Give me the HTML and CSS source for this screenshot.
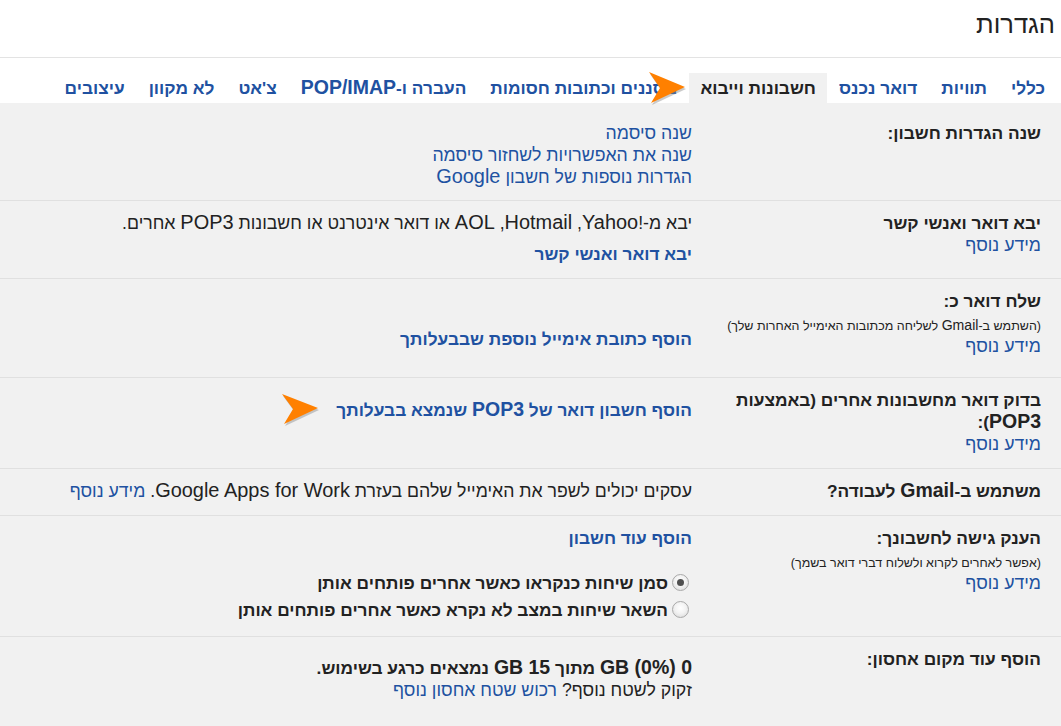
FILE: index.html
```html
<!DOCTYPE html>
<html lang="he" dir="rtl">
<head>
<meta charset="utf-8">
<title>הגדרות</title>
<link rel="stylesheet" href="styles.css">
</head>
<body>
<header class="top">
  <h1 class="title">הגדרות</h1>
</header>
<nav class="tabs">
  <a class="tab" href="#">כללי</a>
  <a class="tab" href="#">תוויות</a>
  <a class="tab" href="#">דואר נכנס</a>
  <a class="tab active" href="#">חשבונות וייבוא</a>
  <a class="tab" href="#">מסננים וכתובות חסומות</a>
  <a class="tab" href="#">העברה ו-<span class="lt">POP/IMAP</span></a>
  <a class="tab" href="#">צ'אט</a>
  <a class="tab" href="#">לא מקוון</a>
  <a class="tab" href="#">עיצובים</a>
  <svg class="arrow arrow-tab" width="38" height="33" viewBox="0 0 38 33" aria-hidden="true">
    <polygon points="1,2 37,17 3,33 12,18" fill="#8a8a8a" opacity="0.45"/>
    <polygon points="0,0 36,15 2,31 11,16" fill="#ff8000"/>
  </svg>
</nav>
<main class="panel">
  <section class="row row-first">
    <div class="label"><div class="label-title">שנה הגדרות חשבון:</div></div>
    <div class="content">
      <a class="link block" href="#">שנה סיסמה</a>
      <a class="link block" href="#">שנה את האפשרויות לשחזור סיסמה</a>
      <a class="link block" href="#">הגדרות נוספות של חשבון <span class="lt">Google</span></a>
    </div>
  </section>
  <section class="row">
    <div class="label">
      <div class="label-title">יבא דואר ואנשי קשר</div>
      <a class="link block" href="#">מידע נוסף</a>
    </div>
    <div class="content">
      <div class="text">יבא מ-!<span class="lt">Yahoo</span>&rlm;, <span class="lt">Hotmail</span>&rlm;, <span class="lt">AOL</span> או דואר אינטרנט או חשבונות <span class="lt">POP3</span> אחרים.</div>
      <a class="link strong block gap-import" href="#">יבא דואר ואנשי קשר</a>
    </div>
  </section>
  <section class="row row-send">
    <div class="label">
      <div class="label-title">שלח דואר כ:</div>
      <div class="hint">(השתמש ב-<span class="lt">Gmail</span> לשליחה מכתובות האימייל האחרות שלך)</div>
      <a class="link block" href="#">מידע נוסף</a>
    </div>
    <div class="content">
      <a class="link strong block gap-send" href="#">הוסף כתובת אימייל נוספת שבבעלותך</a>
    </div>
  </section>
  <section class="row">
    <div class="label">
      <div class="label-title">בדוק דואר מחשבונות אחרים (באמצעות <span class="lt">POP3</span>):</div>
      <a class="link block" href="#">מידע נוסף</a>
    </div>
    <div class="content">
      <div class="pop-line">
        <a class="link strong" href="#">הוסף חשבון דואר של <span class="lt">POP3</span> שנמצא בבעלותך</a>
        <svg class="arrow arrow-inline" width="38" height="32" viewBox="0 0 38 32" aria-hidden="true">
          <polygon points="1,2 37,16 3,32 12,17" fill="#8a8a8a" opacity="0.45"/>
          <polygon points="0,0 36,14 2,30 11,15" fill="#ff8000"/>
        </svg>
      </div>
    </div>
  </section>
  <section class="row">
    <div class="label">
      <div class="label-title">משתמש ב-<span class="lt">Gmail</span> לעבודה?</div>
    </div>
    <div class="content">
      <div class="text">עסקים יכולים לשפר את האימייל שלהם בעזרת <span class="lt">Google Apps for Work</span>. <a class="link" href="#">מידע נוסף</a></div>
    </div>
  </section>
  <section class="row">
    <div class="label">
      <div class="label-title">הענק גישה לחשבונך:</div>
      <div class="hint">(אפשר לאחרים לקרוא ולשלוח דברי דואר בשמך)</div>
      <a class="link block" href="#">מידע נוסף</a>
    </div>
    <div class="content">
      <a class="link strong block" href="#">הוסף עוד חשבון</a>
      <div class="radios">
        <label class="radio-row"><span class="radio checked"></span><span class="radio-text">סמן שיחות כנקראו כאשר אחרים פותחים אותן</span></label>
        <label class="radio-row"><span class="radio"></span><span class="radio-text">השאר שיחות במצב לא נקרא כאשר אחרים פותחים אותן</span></label>
      </div>
    </div>
  </section>
  <section class="row row-last">
    <div class="label">
      <div class="label-title">הוסף עוד מקום אחסון:</div>
    </div>
    <div class="content">
      <div class="text strong-text gap-storage"><span class="lt">0 GB (0%)</span> מתוך <span class="lt">15 GB</span> נמצאים כרגע בשימוש.</div>
      <div class="text">זקוק לשטח נוסף? <a class="link" href="#">רכוש שטח אחסון נוסף</a></div>
    </div>
  </section>
</main>
</body>
</html>
```
FILE: styles.css
```css
html, body {
  margin: 0;
}

body {
  direction: rtl;
  font-family: "Liberation Sans", Arial, sans-serif;
  color: #222;
  background: #fff;
  min-height: 100vh;
  display: flex;
  flex-direction: column;
}

/* Latin runs: Arial's Latin is set larger relative to its Hebrew */
.lt {
  font-size: 1.127em;
  line-height: 1;
}

.top {
  height: 58px;
  box-sizing: border-box;
  border-bottom: 1px solid #e3e3e3;
  padding: 11px 6px 0 0;
}

.title {
  margin: 0;
  font-size: 25.5px;
  font-weight: normal;
  line-height: 26px;
  color: #222;
}

.tabs {
  position: relative;
  display: flex;
  padding: 15px 4px 0 0;
}

.tab {
  padding: 0 12px;
  line-height: 30px;
  font-size: 17.3px;
  font-weight: bold;
  color: #2051a1;
  text-decoration: none;
  white-space: nowrap;
}

.tab.active {
  background: #f1f1f1;
  color: #222;
  padding: 0 11px;
}

.arrow-tab {
  position: absolute;
  top: 14px;
  right: 374px;
}

.panel {
  flex: 1;
  background: #f1f1f1;
  padding-top: 7px;
}

.row {
  display: grid;
  grid-template-columns: 320px 1fr;
  column-gap: 29px;
  padding: 11px 20px 13px 10px;
  border-top: 1px solid #e0e0e0;
  font-size: 17.7px;
  line-height: 22px;
}

.row-first {
  border-top: none;
  padding-top: 12px;
  padding-bottom: 12px;
}

.row-send {
  padding-bottom: 20px;
}

.label-title {
  font-size: 17.3px;
  font-weight: bold;
  line-height: 22px;
  color: #222;
}

.hint {
  font-size: 12.5px;
  line-height: 18px;
  margin-top: 5px;
  color: #222;
}

.link {
  color: #2051a1;
  text-decoration: none;
}

.block {
  display: block;
}

.strong,
.strong-text {
  font-size: 17.3px;
  font-weight: bold;
}

.gap-import {
  margin-top: 9px;
}

.gap-send {
  margin-top: 38px;
}

.gap-storage {
  margin-top: 9px;
}

.pop-line {
  display: flex;
  align-items: center;
  margin-top: 10px;
  height: 22px;
}

.arrow-inline {
  margin-right: 16px;
  flex: none;
}

.radios {
  margin-top: 20px;
}

.radio-row {
  display: flex;
  align-items: center;
  height: 27px;
  font-size: 17.3px;
  font-weight: bold;
  color: #222;
}

.radio {
  width: 17px;
  height: 17px;
  box-sizing: border-box;
  border-radius: 50%;
  border: 1px solid #a9a9a9;
  background: radial-gradient(circle at 50% 40%, #ffffff 0%, #f3f3f3 45%, #d6d6d6 100%);
  margin: 0 3px 0 4px;
  display: flex;
  align-items: center;
  justify-content: center;
  flex: none;
}

.radio.checked::after {
  content: "";
  width: 7px;
  height: 7px;
  border-radius: 50%;
  background: #4f4f4f;
}
```
